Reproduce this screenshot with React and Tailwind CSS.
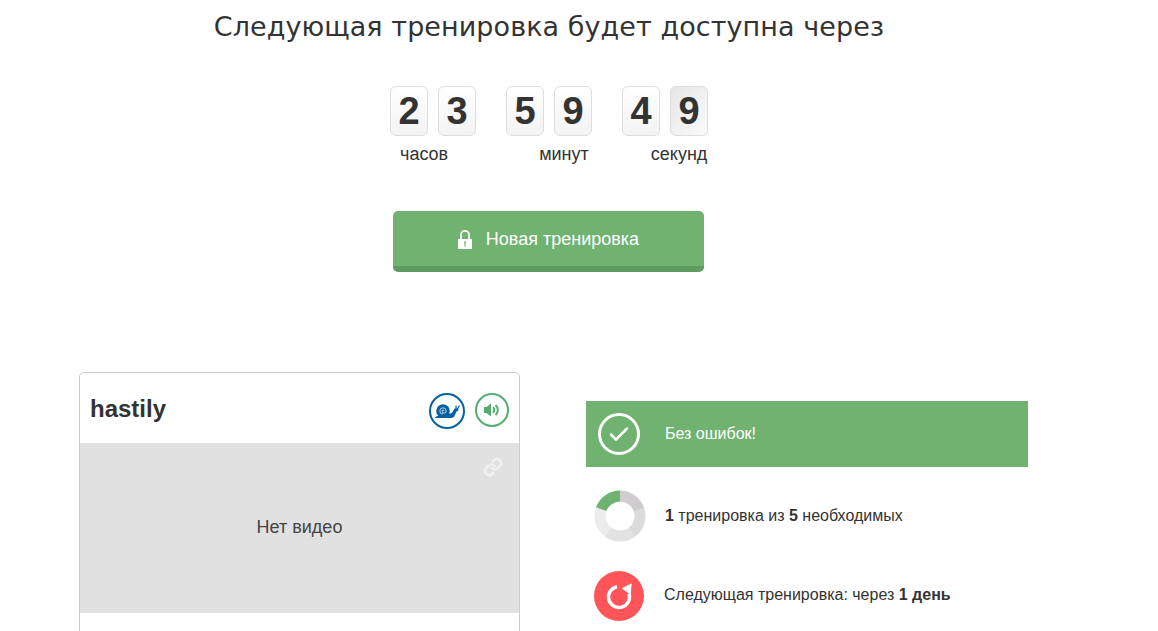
const ARC = 2 * Math.PI * 20;

function Digit({ d, active }) {
  return (
    <div className={`w-[38px] h-[50px] rounded-[6px] border border-[#dddddd] flex items-center justify-center text-[38px] font-bold text-[#333333] ${active ? "bg-gradient-to-br from-[#e6e6e6] to-[#fbfbfb]" : "bg-gradient-to-b from-white to-[#f3f3f3]"}`}>
      {d}
    </div>
  );
}

function Donut() {
  const colors = ["#cfcdcf", "#dbdbdb", "#e3e2e3", "#ececec", "#70b26f"];
  return (
    <svg width="52" height="52" viewBox="0 0 52 52" className="-rotate-90">
      {colors.map((c, i) => (
        <circle key={c} cx="26" cy="26" r="20" fill="none" stroke={c} strokeWidth="11" strokeDasharray={`${ARC / 5} ${ARC}`} strokeDashoffset={-(ARC / 5) * i} />
      ))}
    </svg>
  );
}

function Snail() {
  return (
    <svg width="32" height="32" viewBox="2 2 32 32">
      <circle cx="14" cy="18" r="6.800" fill="#07609f" />
      <path d="M5.500 25H22C24 25 25.300 24 26 22L27.500 18.500 29.500 17.500 29 15 25.500 15.500 23.500 19C22 21 20.500 21 19 20L14 23H8z" fill="#07609f" />
      <path d="M14 21.200a3.200 3.200 0 1 1 3.200-3.200 2.100 2.100 0 1 1-4.200 0 1 1 0 0 1 2 0" fill="none" stroke="#ffffff" strokeWidth="0.700" />
      <path d="M27.200 15.500 27 12.500M28.800 15.500 30.500 12.500" stroke="#07609f" strokeWidth="1.200" fill="none" />
    </svg>
  );
}

export default function App() {
  return (
    <div className="w-[1158px] h-[631px] overflow-hidden bg-white text-[#333333] font-['Liberation_Sans',Arial,sans-serif]">
      <div className="w-[1098px] flex flex-col items-center">
        <h1 className="mt-[9px] h-[36px] leading-[36px] text-[27px] tracking-[0.07px] font-['DejaVu_Sans',sans-serif] whitespace-nowrap">
          Следующая тренировка будет доступна через
        </h1>
        <div className="mt-[41px] flex gap-[30px]">
          <div className="flex gap-[10px]"><Digit d="2" /><Digit d="3" /></div>
          <div className="flex gap-[10px]"><Digit d="5" /><Digit d="9" /></div>
          <div className="flex gap-[10px]"><Digit d="4" /><Digit d="9" active /></div>
        </div>
        <div className="mt-[8px] w-[318px] flex text-[18px] leading-[20px] whitespace-nowrap">
          <span className="ml-[10px]">часов</span>
          <span className="ml-[91px]">минут</span>
          <span className="ml-[62px]">секунд</span>
        </div>
        <button className="mt-[47px] mr-[1px] w-[311px] h-[61px] pt-[1px] rounded-[5px] bg-[#70b26f] border-b-[6px] border-[#5f9a5e] flex items-center justify-center gap-[14px] text-white text-[18px]">
          <svg width="14" height="19" viewBox="0 0 14 19" fill="white">
            <path d="M2 9V5a5 5 0 0 1 10 0v4h-1.800V5a3.200 3.200 0 0 0-6.400 0v4z" />
            <path fillRule="evenodd" d="M0 9h14v10H0zM6.400 12.500V16.500h1.200v-4h.9L7 11 5.500 12.500z" />
          </svg>
          Новая тренировка
        </button>
      </div>
      <div className="mt-[100px] flex items-start">
        <div className="ml-[79px] w-[441px] h-[300px] rounded-t-[5px] border border-[#cccccc] shrink-0">
          <div className="h-[70px] flex items-center justify-between pl-[10px] pr-[10px]">
            <span className="pt-[2px] text-[24px] font-bold">hastily</span>
            <div className="flex gap-[10px] mt-[5px]">
              <div className="w-[36px] h-[36px] rounded-full border-2 border-[#07609f] flex items-center justify-center"><Snail /></div>
              <div className="w-[34px] h-[34px] rounded-full border-2 border-[#52ad6f] flex items-center justify-center">
                <svg width="16" height="14" viewBox="0 0 16 14" fill="#52ad6f">
                  <path d="M0 4h2.500L7 .500v13L2.500 10H0z" />
                  <path d="M9 4.300a3.400 3.400 0 0 1 0 5.400M11.500 2a6.500 6.500 0 0 1 0 10" fill="none" stroke="#52ad6f" strokeWidth="2" />
                </svg>
              </div>
            </div>
          </div>
          <div className="relative h-[170px] pb-[2px] bg-[#e1e1e1] flex items-center justify-center text-[18px] text-[#444444]">
            Нет видео
            <svg className="absolute right-[16px] top-[14px]" width="20" height="20" viewBox="0 0 24 24" fill="none" stroke="#efefef" strokeWidth="3.200" strokeLinecap="round" strokeLinejoin="round">
              <path d="M10 13a5 5 0 0 0 7.500.5l3-3a5 5 0 0 0-7-7l-1.700 1.700" />
              <path d="M14 11a5 5 0 0 0-7.500-.5l-3 3a5 5 0 0 0 7 7l1.700-1.700" />
            </svg>
          </div>
        </div>
        <div className="ml-[66px] w-[442px] mt-[29px] text-[16px]">
          <div className="h-[66px] bg-[#70b26f] flex items-center text-white">
            <div className="ml-[12px] w-[42px] h-[42px] rounded-full border-[3px] border-white flex items-center justify-center">
              <svg width="20" height="16" viewBox="0 0 20 16" fill="none" stroke="white" strokeWidth="2.500" strokeLinecap="round" strokeLinejoin="round"><path d="M2 8.500 7 13.500 18 2.500" /></svg>
            </div>
            <span className="ml-[25px]">Без ошибок!</span>
          </div>
          <div className="mt-[23px] h-[52px] flex items-center">
            <div className="ml-[8px]"><Donut /></div>
            <span className="ml-[19px]"><b>1</b> тренировка из <b>5</b> необходимых</span>
          </div>
          <div className="mt-[29px] h-[50px] flex items-center">
            <div className="ml-[8px] w-[50px] h-[50px] rounded-full bg-[#ff5558]">
              <svg width="50" height="50" viewBox="0 0 50 50" fill="none">
                <path d="M23 15.700A10.500 10.500 0 1 0 35 22.800" stroke="white" strokeWidth="3.500" />
                <path d="M27.700 17.300 37.700 12.300 36.700 24z" fill="white" />
              </svg>
            </div>
            <span className="ml-[20px] -mt-[2px]">Следующая тренировка: через <b>1 день</b></span>
          </div>
        </div>
      </div>
    </div>
  );
}
